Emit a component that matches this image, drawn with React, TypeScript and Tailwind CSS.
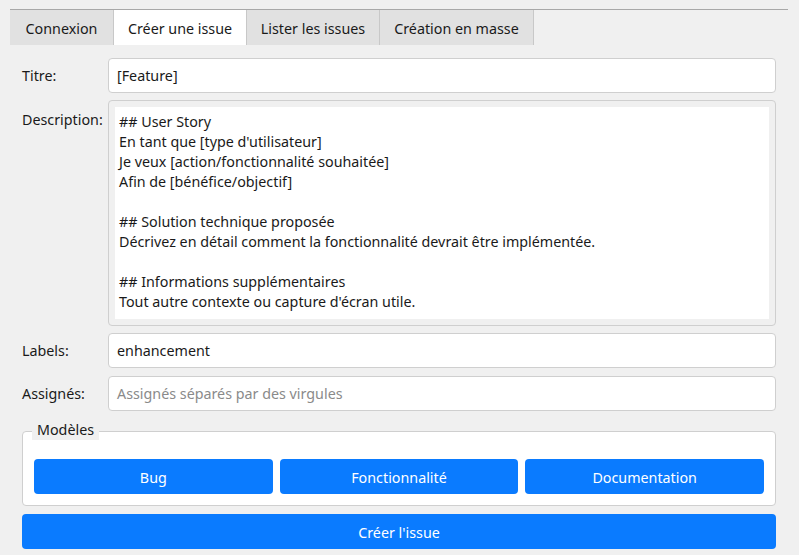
import React from "react";

const tabs = [
  { label: "Connexion", w: "w-[104px]" },
  { label: "Créer une issue", w: "w-[133px]", active: true },
  { label: "Lister les issues", w: "w-[133px]" },
  { label: "Création en masse", w: "w-[154px]" },
];

const description = [
  "## User Story",
  "En tant que [type d'utilisateur]",
  "Je veux [action/fonctionnalité souhaitée]",
  "Afin de [bénéfice/objectif]",
  "",
  "## Solution technique proposée",
  "Décrivez en détail comment la fonctionnalité devrait être implémentée.",
  "",
  "## Informations supplémentaires",
  "Tout autre contexte ou capture d'écran utile.",
];

const Field = ({ label, value, placeholder }: { label: string; value?: string; placeholder?: string }) => (
  <div className="flex items-center">
    <div className="w-[86px] shrink-0 pt-[1px] text-[#1a1a1a]">{label}</div>
    <div className="flex-1 h-[35px] flex items-center px-[8px] pt-[1px] bg-white border border-[#cfcfcf] rounded-[4px]">
      {value ? <span className="text-[#1a1a1a]">{value}</span> : <span className="text-[#8a8a8a]">{placeholder}</span>}
    </div>
  </div>
);

export default function App() {
  return (
    <div className="w-[799px] h-[555px] bg-[#f0f0f0] overflow-hidden text-[14.3px] font-['Noto_Sans',sans-serif]">
      <div className="pt-[9px] px-[10px]">
        <div className="w-[778px] border-t border-[#a8a8a8] flex">
          {tabs.map((t) => (
            <div
              key={t.label}
              className={`${t.w} h-[35px] pt-[2px] flex items-center justify-center border-r border-[#c8c8c8] text-[#1a1a1a] ${
                t.active ? "bg-white" : "bg-[#e1e1e1]"
              }`}
            >
              {t.label}
            </div>
          ))}
        </div>
      </div>

      <div className="px-[22px] pt-[13px] w-[799px] pr-[23px] flex flex-col">
        <Field label="Titre:" value="[Feature]" />

        <div className="flex mt-[7px]">
          <div className="w-[86px] shrink-0 pt-[9px] text-[#1a1a1a]">Description:</div>
          <div className="flex-1 h-[226px] border border-[#cfcfcf] rounded-[4px] bg-[#f0f0f0] p-[6px]">
            <div className="h-full bg-white px-[4px] pt-[5px] leading-[20px] text-[#1a1a1a]">
              {description.map((l, i) => (
                <div key={i} className="h-[20px] whitespace-pre">{l}</div>
              ))}
            </div>
          </div>
        </div>

        <div className="mt-[7px]">
          <Field label="Labels:" value="enhancement" />
        </div>
        <div className="mt-[8px]">
          <Field label="Assignés:" placeholder="Assignés séparés par des virgules" />
        </div>

        <div className="relative mt-[20px] h-[75px] border border-[#cfcfcf] rounded-[4px] bg-white px-[11px] pt-[27px]">
          <div className="absolute left-[9px] -top-[12px] px-[5px] bg-[#f0f0f0] leading-[20px] text-[#1a1a1a]">Modèles</div>
          <div className="grid grid-cols-3 gap-[7px]">
            {["Bug", "Fonctionnalité", "Documentation"].map((b) => (
              <button key={b} className="h-[35px] pt-[2px] rounded-[4px] bg-[#0a7bff] text-white">
                {b}
              </button>
            ))}
          </div>
        </div>

        <button className="mt-[8px] h-[35px] pt-[2px] rounded-[4px] bg-[#0a7bff] text-white">Créer l'issue</button>
      </div>
    </div>
  );
}
